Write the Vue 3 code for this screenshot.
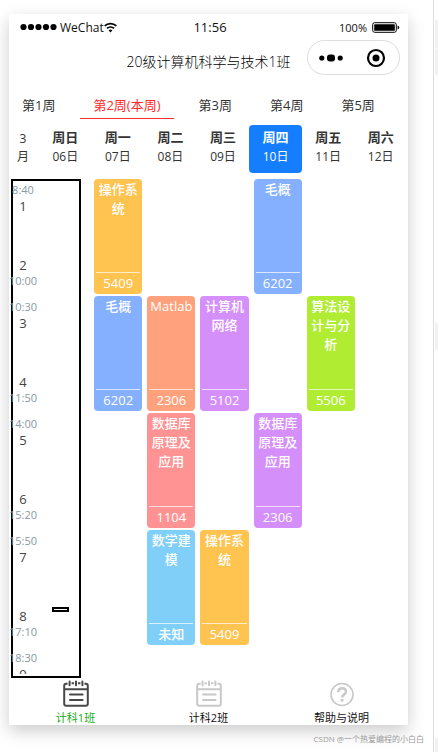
<template>
  <div class="page">
    <main class="main">
      <div class="phone">
        <div class="status">
          <div class="status-left">
            <svg class="signal" viewBox="0 0 37 8" aria-hidden="true">
              <circle v-for="n in 5" :key="n" :cx="n * 7.5 - 4" cy="4" r="3.1" />
            </svg>
            <span>WeChat</span>
            <svg class="wifi" viewBox="0 0 12 10" aria-hidden="true">
              <path d="M.6 3.6a7.8 7.8 0 0 1 10.8 0M2.7 5.9a4.8 4.8 0 0 1 6.6 0" />
              <path class="solid" d="M4.2 7.6a2.6 2.6 0 0 1 3.6 0L6 9.6z" />
            </svg>
          </div>
          <span class="clock">11:56</span>
          <div class="status-right">
            <span>100%</span>
            <svg class="battery" viewBox="0 0 28 11" aria-hidden="true">
              <rect x=".7" y=".7" width="23.6" height="9.6" rx="2" fill="none" stroke="#000" />
              <rect x="2.2" y="2.2" width="20.6" height="6.6" rx=".6" />
              <path d="M25.6 3.4q1.6.4 1.6 2.1t-1.6 2.1z" />
            </svg>
          </div>
        </div>

        <header class="nav">
          <h1>20级计算机科学与技术1班</h1>
          <div class="capsule">
            <button type="button" aria-label="更多">
              <svg width="24" height="10" viewBox="0 0 24 10">
                <circle cx="2.8" cy="5" r="2.6" />
                <rect x="8" y="1.4" width="8" height="7" rx="3" />
                <circle cx="21.2" cy="5" r="2.6" />
              </svg>
            </button>
            <button type="button" aria-label="关闭">
              <svg width="20" height="20" viewBox="0 0 20 20">
                <circle cx="10" cy="10" r="8" fill="none" stroke="#000" stroke-width="2.2" />
                <circle cx="10" cy="10" r="3.5" />
              </svg>
            </button>
          </div>
        </header>

        <nav class="weeks">
          <button
            v-for="(week, i) in weeks"
            :key="week"
            type="button"
            :class="{ active: i === currentWeek }"
            @click="currentWeek = i"
          >
            {{ week }}
          </button>
        </nav>

        <div class="days">
          <div class="month"><span>3</span><span>月</span></div>
          <div v-for="day in days" :key="day.date" class="day" :class="{ today: day.today }">
            <strong>{{ day.name }}</strong>
            <span>{{ day.date }}</span>
          </div>
        </div>

        <section class="schedule">
          <div class="frame"></div>
          <div class="scroller">
            <div class="times">
              <div v-for="(block, i) in blocks" :key="block.start" class="block">
                <div>
                  <time>{{ block.start }}</time>
                  <span>{{ i * 2 + 1 }}</span>
                </div>
                <div v-if="block.end">
                  <span>{{ i * 2 + 2 }}</span>
                  <time>{{ block.end }}</time>
                </div>
              </div>
            </div>
            <div class="courses">
              <article
                v-for="c in courses"
                :key="c.day + '-' + c.block"
                class="course"
                :class="c.color"
                :style="{ gridColumn: c.day, gridRow: c.block }"
              >
                <h2>{{ c.name }}</h2>
                <p>{{ c.room }}</p>
              </article>
            </div>
          </div>
          <div class="marker"></div>
        </section>

        <nav class="tabbar">
          <button
            v-for="(tab, i) in tabs"
            :key="tab.label"
            type="button"
            :class="{ active: i === currentTab }"
            @click="currentTab = i"
          >
            <svg v-if="tab.icon === 'calendar'" viewBox="0 0 26 28" aria-hidden="true">
              <path d="M4.6 3.8H3.2Q1.2 3.8 1.2 5.8v18q0 2 2 2h19.6q2 0 2-2v-18q0-2-2-2h-1.4M8.6 3.2h2.4M15 3.2h2.4M1.2 9.3h23.6" />
              <path d="M6.6 1.6v3.6M13 1.6v3.6M19.4 1.6v3.6M7 14.6h12.6M7 20h12.6" stroke-linecap="round" />
            </svg>
            <svg v-else viewBox="0 0 26 28" aria-hidden="true">
              <circle cx="13" cy="14.5" r="11" stroke-width="1.6" />
              <path d="M9.3 12.2q0-4 3.8-4 3.9 0 3.9 3.4 0 1.8-2 3-1.9 1.1-1.9 2.8" stroke-width="2.4" />
              <path d="M13.1 19v2.6" stroke-width="2.8" />
            </svg>
            <span>{{ tab.label }}</span>
          </button>
        </nav>
      </div>
      <p class="watermark">CSDN @一个热爱编程的小白白</p>
    </main>
    <aside class="side">
      <i class="first"></i>
      <i class="second"></i>
      <i class="third"></i>
      <i class="last"></i>
    </aside>
  </div>
</template>

<script setup>
import { ref } from 'vue'

const currentWeek = ref(1)
const currentTab = ref(0)

const weeks = ['第1周', '第2周(本周)', '第3周', '第4周', '第5周']

const days = [
  { name: '周日', date: '06日' },
  { name: '周一', date: '07日' },
  { name: '周二', date: '08日' },
  { name: '周三', date: '09日' },
  { name: '周四', date: '10日', today: true },
  { name: '周五', date: '11日' },
  { name: '周六', date: '12日' },
]

const blocks = [
  { start: '8:40', end: '10:00' },
  { start: '10:30', end: '11:50' },
  { start: '14:00', end: '15:20' },
  { start: '15:50', end: '17:10' },
  { start: '18:30' },
]

// day: 1 = 周日 ... 7 = 周六
const courses = [
  { day: 2, block: 1, name: '操作系统', room: '5409', color: 'yellow' },
  { day: 5, block: 1, name: '毛概', room: '6202', color: 'blue' },
  { day: 2, block: 2, name: '毛概', room: '6202', color: 'blue' },
  { day: 3, block: 2, name: 'Matlab', room: '2306', color: 'orange' },
  { day: 4, block: 2, name: '计算机网络', room: '5102', color: 'purple' },
  { day: 6, block: 2, name: '算法设计与分析', room: '5506', color: 'green' },
  { day: 3, block: 3, name: '数据库原理及应用', room: '1104', color: 'red' },
  { day: 5, block: 3, name: '数据库原理及应用', room: '2306', color: 'purple' },
  { day: 3, block: 4, name: '数学建模', room: '未知', color: 'sky' },
  { day: 4, block: 4, name: '操作系统', room: '5409', color: 'yellow' },
]

const tabs = [
  { label: '计科1班', icon: 'calendar' },
  { label: '计科2班', icon: 'calendar' },
  { label: '帮助与说明', icon: 'help' },
]
</script>

<style>
body {
  background: #fff;
}
</style>

<style scoped>
.page {
  display: flex;
  height: 100vh;
  min-height: 600px;
  overflow: hidden;
  font-family: "Open Sans", "Noto Sans CJK SC", sans-serif;
  color: #333;
}
button {
  padding: 0;
  border: 0;
  background: none;
  font: inherit;
  color: inherit;
  cursor: pointer;
}
h1,
h2,
p {
  margin: 0;
}
.main {
  flex: 1;
  min-width: 0;
  display: flex;
  flex-direction: column;
  padding: 14px 9px 6px;
}
.phone {
  flex: 1;
  min-height: 0;
  display: flex;
  flex-direction: column;
  margin-right: 16px;
  background: #fff;
  box-shadow: 0 6px 16px rgba(0, 0, 0, 0.2);
  overflow: hidden;
}

.status {
  display: grid;
  grid-template-columns: 1fr auto 1fr;
  align-items: center;
  height: 26px;
  padding: 0 8px 0 11px;
  font-size: 12px;
  color: #111;
}
.status svg {
  fill: #000;
}
.status-left,
.status-right {
  display: flex;
  align-items: center;
}
.status-left .signal {
  width: 37px;
  height: 8px;
  margin-right: 3px;
}
.status-left .wifi {
  width: 13px;
  height: 11px;
}
.wifi path {
  fill: none;
  stroke: #000;
  stroke-width: 1.6;
}
.wifi .solid {
  fill: #000;
  stroke: none;
}
.status-right {
  justify-content: flex-end;
  gap: 5px;
  font-size: 11px;
}
.battery {
  width: 28px;
  height: 11px;
}
.clock {
  font-size: 13px;
}

.nav {
  display: grid;
  grid-template-columns: 1fr auto 1fr;
  align-items: center;
  height: 42px;
  padding: 0 8px;
}
.nav h1 {
  grid-column: 2;
  font-size: 14px;
  font-weight: 300;
  color: #000;
}
.capsule {
  justify-self: end;
  align-self: start;
  display: grid;
  grid-template-columns: 1fr 1fr;
  width: 93px;
  height: 35px;
  box-sizing: border-box;
  border: 1px solid #ddd;
  border-radius: 18px;
}
.capsule button {
  display: flex;
  align-items: center;
  justify-content: center;
}

.weeks {
  display: flex;
  gap: 12px;
  flex: none;
  height: 26px;
  margin-top: 11px;
  overflow: hidden;
  font-size: 13px;
  white-space: nowrap;
}
.weeks button {
  flex: none;
  box-sizing: border-box;
  height: 26px;
  padding: 0 13px;
  border-bottom: 1px solid transparent;
  line-height: 25px;
}
.weeks .active {
  border-color: #ff2a2a;
  color: #ff2a2a;
}

.days {
  display: grid;
  grid-template-columns: 30px repeat(7, 1fr);
  flex: none;
  height: 48px;
  margin: 6px 1px 6px 0;
  font-size: 12px;
  text-align: center;
}
.month,
.day {
  display: flex;
  flex-direction: column;
}
.month {
  padding: 5px 2px 0 0;
  line-height: 18px;
}
.day {
  padding-top: 3px;
  border-radius: 4px;
  line-height: 19px;
}
.day strong {
  font-size: 13px;
}
.today {
  background: #147eff;
  color: #fff;
}

.schedule {
  position: relative;
  flex: 1;
  min-height: 0;
  display: flex;
  padding-bottom: 4px;
}
.scroller {
  position: relative;
  flex: 1;
  display: grid;
  grid-template-columns: 30px 1fr;
  align-items: start;
  margin-right: -3px;
  overflow: hidden auto;
  scrollbar-width: none;
}
.block {
  display: flex;
  flex-direction: column;
  justify-content: space-between;
  box-sizing: border-box;
  height: 117px;
  padding: 3px 0 7px;
}
.block span,
.block time {
  display: block;
  margin-right: 2px;
  line-height: 16px;
  text-align: center;
}
.block span {
  font-size: 13px;
  color: #444;
}
.block time {
  font-size: 11px;
  color: #8799a3;
}
.courses {
  display: grid;
  grid-template-columns: repeat(7, 1fr);
  grid-template-rows: repeat(4, 115px);
  row-gap: 2px;
}
.course {
  display: flex;
  flex-direction: column;
  justify-content: space-between;
  margin: 0 3px 0 2px;
  padding: 1px 2px 0;
  border-radius: 4px;
  color: #fff;
  font-size: 13px;
  text-align: center;
}
.course h2 {
  font-size: 13px;
  font-weight: 500;
  line-height: 19px;
}
.course p {
  border-top: 1px solid rgba(255, 255, 255, 0.7);
  font-weight: 500;
  line-height: 21px;
}
.yellow { background: #ffc34f; }
.blue { background: #85b0ff; }
.orange { background: #ffa17c; }
.purple { background: #d58ffa; }
.green { background: #afec32; }
.red { background: #ff9393; }
.sky { background: #80cff9; }

/* black boxes around the time column */
.frame {
  position: absolute;
  top: 0;
  bottom: 0;
  left: 2px;
  width: 70px;
  box-sizing: border-box;
  border: 2px solid #000;
}
.marker {
  position: absolute;
  left: 43px;
  bottom: 66px;
  width: 17px;
  height: 5px;
  box-sizing: border-box;
  border: 2px solid #000;
}

.tabbar {
  display: grid;
  grid-template-columns: repeat(3, 1fr);
  flex: none;
  height: 47px;
  font-size: 11px;
  color: #111;
}
.tabbar button {
  display: flex;
  flex-direction: column;
  align-items: center;
  padding-top: 2px;
}
.tabbar svg {
  width: 26px;
  height: 28px;
  fill: none;
  stroke: #c8c8c8;
  stroke-width: 2;
}
.tabbar span {
  margin-top: 2px;
  line-height: 16px;
}
.tabbar .active {
  color: #1aad19;
}
.tabbar .active svg {
  stroke: #484848;
}

.watermark {
  margin-top: 7px;
  font-size: 8px;
  line-height: 14px;
  text-align: right;
  color: #999;
}

.side {
  flex: none;
  display: flex;
  flex-direction: column;
  width: 3px;
  padding-left: 1px;
  border-left: 1px solid #ddd;
}
.side i {
  flex: none;
  background: #f1f1f1;
}
.side .first {
  height: 28px;
  margin-top: 20px;
}
.side .second {
  height: 26px;
  margin-top: 1px;
}
.side .third {
  height: 27px;
  margin-top: 248px;
}
.side .last {
  height: 14px;
  margin-top: auto;
}
</style>
